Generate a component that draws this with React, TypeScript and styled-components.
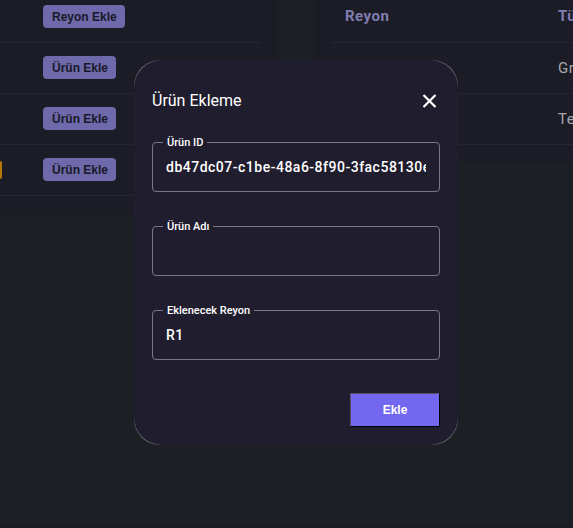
import React from "react";
import styled, { createGlobalStyle } from "styled-components";

const GlobalStyle = createGlobalStyle`
  *, *::before, *::after { box-sizing: border-box; }
  body {
    margin: 0;
    background: #1c1f23;
    color: #a9a8ad;
    font-family: Roboto, "Liberation Sans", sans-serif;
    overflow: hidden;
  }
`;

const Page = styled.main`
  display: grid;
  grid-template-columns: 278px minmax(0, 1fr);
  column-gap: 36px;
  align-items: start;
  min-height: 100vh;
  border-bottom: 4px solid #1c1c24;
`;

const Panel = styled.section<{ $side: "left" | "right" }>`
  background: #1c1c26;
  overflow: hidden;
  padding: ${(p) => (p.$side === "left" ? "0 18px 18px 0" : "0 0 18px 18px")};
`;

const Table = styled.table`
  width: 100%;
  table-layout: fixed;
  border-collapse: collapse;
  font-size: 15px;
  letter-spacing: 0.5px;
`;

const Row = styled.tr<{ $head?: boolean }>`
  height: ${(p) => (p.$head ? "42px" : "51px")};
  border-bottom: 1px solid #272733;
`;

const HeadCell = styled.th<{ $wide?: boolean }>`
  width: ${(p) => (p.$wide ? "213px" : "auto")};
  padding: 0 0 9px 13px;
  color: #807db0;
  font-weight: 700;
  text-align: left;
  white-space: nowrap;
`;

const Cell = styled.td`
  padding: 0 0 0 13px;
  white-space: nowrap;
`;

const ActionHead = styled(HeadCell)`
  padding: 0 0 8px;
`;

const ActionCell = styled(Cell)`
  padding: 0;
`;

const TagCell = styled(Cell)`
  width: 43px;
  padding: 0;
`;

const Tag = styled.span`
  display: block;
  width: 2px;
  height: 18px;
  border-radius: 0 2px 2px 0;
  background: #b57806;
`;

const RowButton = styled.button`
  display: block;
  height: 23px;
  padding: 0 8px 0 9px;
  border: 0;
  border-radius: 4px;
  background: #6d69aa;
  color: #191827;
  font: 700 12px/22px "Liberation Sans", Arial, sans-serif;
`;

const Overlay = styled.div`
  position: fixed;
  inset: 0;
  display: flex;
  justify-content: center;
  align-items: flex-start;
  padding: 60px 0 0 19px;
`;

const DialogFrame = styled.div`
  width: 324px;
  border-radius: 26px;
  background: #65656b;
`;

const Dialog = styled.form`
  display: flex;
  flex-direction: column;
  padding: 18px;
  border-radius: 28px;
  background: #201e2e;
  color: #fff;
`;

const DialogHeader = styled.header`
  display: flex;
  align-items: center;
  justify-content: space-between;
  height: 45px;
  margin-bottom: 11px;
`;

const Title = styled.h1`
  margin: 0;
  font-size: 16px;
  font-weight: 400;
  line-height: 24px;
`;

const CloseButton = styled.button`
  display: flex;
  padding: 0;
  border: 0;
  background: none;
  color: #fff;
`;

const Fields = styled.div`
  display: flex;
  flex-direction: column;
  gap: 26px;
`;

const Field = styled.fieldset`
  min-width: 0;
  height: 58px;
  margin: 0;
  padding: 0 13px;
  border: 1px solid #7a7983;
  border-radius: 4px;
`;

const Legend = styled.legend`
  margin-left: -3px;
  padding: 2px 4px 0;
  font-size: 11px;
  font-weight: 500;
  line-height: 14px;
`;

const Input = styled.input`
  display: block;
  width: 100%;
  height: 34px;
  padding: 0;
  border: 0;
  outline: 0;
  background: transparent;
  color: #fff;
  font: 500 14px/34px Roboto, sans-serif;
  letter-spacing: 0.5px;
`;

const Submit = styled.button`
  align-self: flex-end;
  width: 90px;
  height: 34px;
  margin-top: 33px;
  border: 1px solid;
  border-color: #555261 #000 #000 #555261;
  background: #7367f0;
  color: #fff;
  font: 700 12px/16px "Liberation Sans", Arial, sans-serif;
`;

const fields = [
  { id: "product-id", label: "Ürün ID", value: "db47dc07-c1be-48a6-8f90-3fac58130e42" },
  { id: "product-name", label: "Ürün Adı", value: "" },
  { id: "target-aisle", label: "Eklenecek Reyon", value: "R1" },
];

export default function App() {
  return (
    <>
      <GlobalStyle />
      <Page>
        <Panel $side="left">
          <Table>
            <thead>
              <Row $head>
                <TagCell />
                <ActionHead><RowButton type="button">Reyon Ekle</RowButton></ActionHead>
              </Row>
            </thead>
            <tbody>
              {[false, false, true].map((tagged, i) => (
                <Row key={i}>
                  <TagCell>{tagged && <Tag />}</TagCell>
                  <ActionCell><RowButton type="button">Ürün Ekle</RowButton></ActionCell>
                </Row>
              ))}
            </tbody>
          </Table>
        </Panel>
        <Panel $side="right">
          <Table>
            <thead>
              <Row $head><HeadCell $wide>Reyon</HeadCell><HeadCell>Tür</HeadCell></Row>
            </thead>
            <tbody>
              <Row><Cell /><Cell>Grup</Cell></Row>
              <Row><Cell /><Cell>Tek</Cell></Row>
            </tbody>
          </Table>
        </Panel>
      </Page>
      <Overlay>
        <DialogFrame role="dialog" aria-labelledby="dialog-title">
          <Dialog onSubmit={(e) => e.preventDefault()}>
            <DialogHeader>
              <Title id="dialog-title">Ürün Ekleme</Title>
              <CloseButton type="button" aria-label="Kapat">
                <svg width="20" height="20" viewBox="0 0 20 20" fill="none" stroke="currentColor" strokeWidth="2.2">
                  <path d="M3.5 4 15.5 16M15.5 4 3.5 16" />
                </svg>
              </CloseButton>
            </DialogHeader>
            <Fields>
              {fields.map((f) => (
                <Field key={f.id}>
                  <Legend><label htmlFor={f.id}>{f.label}</label></Legend>
                  <Input id={f.id} defaultValue={f.value} />
                </Field>
              ))}
            </Fields>
            <Submit type="submit">Ekle</Submit>
          </Dialog>
        </DialogFrame>
      </Overlay>
    </>
  );
}
